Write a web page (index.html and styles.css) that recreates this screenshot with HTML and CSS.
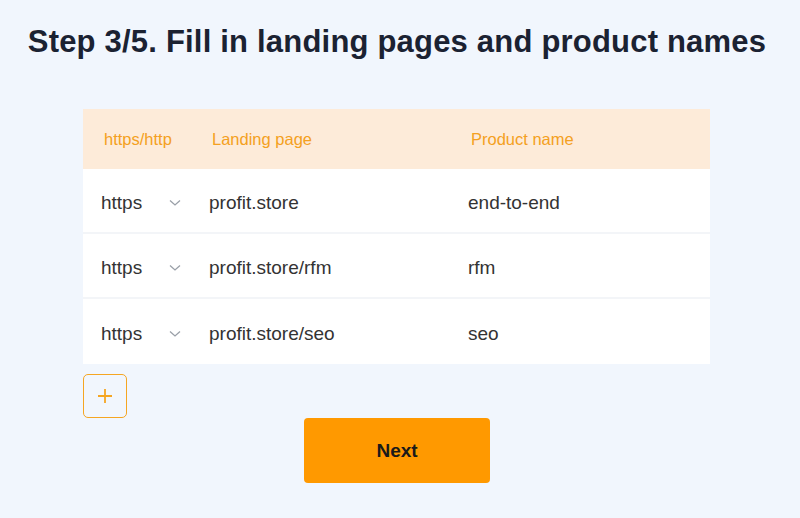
FILE: index.html
```html
<!DOCTYPE html>
<html>
<head>
<meta charset="utf-8">
<link rel="stylesheet" href="styles.css">
</head>
<body>
<div class="page">
  <h1 class="title">Step 3/5. Fill in landing pages and product names</h1>
  <div class="table">
    <div class="row head">
      <div class="c1">https/http</div>
      <div class="c2">Landing page</div>
      <div class="c3">Product name</div>
    </div>
    <div class="row">
      <div class="c1 sel"><span>https</span><svg class="chev" width="12" height="8" viewBox="0 0 12 8"><path d="M1 1.5 L6 6 L11 1.5" fill="none" stroke="#9aa0a8" stroke-width="1.3"/></svg></div>
      <div class="c2">profit.store</div>
      <div class="c3">end-to-end</div>
    </div>
    <div class="row">
      <div class="c1 sel"><span>https</span><svg class="chev" width="12" height="8" viewBox="0 0 12 8"><path d="M1 1.5 L6 6 L11 1.5" fill="none" stroke="#9aa0a8" stroke-width="1.3"/></svg></div>
      <div class="c2">profit.store/rfm</div>
      <div class="c3">rfm</div>
    </div>
    <div class="row last">
      <div class="c1 sel"><span>https</span><svg class="chev" width="12" height="8" viewBox="0 0 12 8"><path d="M1 1.5 L6 6 L11 1.5" fill="none" stroke="#9aa0a8" stroke-width="1.3"/></svg></div>
      <div class="c2">profit.store/seo</div>
      <div class="c3">seo</div>
    </div>
  </div>
  <div class="actions">
    <button class="add"><svg width="16" height="16" viewBox="0 0 16 16"><path d="M8 1 V15 M1 8 H15" stroke="#f5a623" stroke-width="1.8"/></svg></button>
  </div>
  <div class="next-wrap"><button class="next">Next</button></div>
</div>
</body>
</html>
```
FILE: styles.css
```css
html, body { margin: 0; padding: 0; }
body {
  background: #f1f6fd;
  font-family: "Liberation Sans", Arial, sans-serif;
  width: 800px;
  height: 518px;
  overflow: hidden;
}
.page { padding-top: 22px; }
.title {
  margin: 0;
  text-align: center;
  font-size: 31px;
  font-weight: bold;
  color: #1b2232;
  line-height: 40px;
  letter-spacing: 0.2px;
  padding-right: 6px;
}
.table {
  margin: 47px 0 0 83px;
  width: 627px;
}
.row {
  display: flex;
  align-items: center;
  height: 65px;
  padding-top: 5px;
  box-sizing: border-box;
  background: #fff;
  border-bottom: 2px solid #f3f5f8;
  font-size: 19px;
  color: #333;
}
.row.last { border-bottom: none; }
.row.head {
  height: 60px;
  padding-top: 1px;
  background: #fdebd9;
  border-bottom: none;
  color: #f4a021;
  font-size: 16.5px;
}
.c1 { width: 107px; padding-left: 18px; box-sizing: border-box; }
.c2 { width: 259px; padding-left: 19px; box-sizing: border-box; }
.c3 { flex: 1; padding-left: 19px; }
.head .c1 { padding-left: 21px; }
.head .c2 { padding-left: 22px; }
.head .c3 { padding-left: 22px; }
.sel { display: flex; align-items: center; justify-content: space-between; padding-right: 9px; }
.chev { display: block; }
.actions { margin: 10px 0 0 83px; height: 44px; }
.add {
  width: 44px;
  height: 44px;
  border: 1.5px solid #f5a623;
  border-radius: 5px;
  background: transparent;
  display: flex;
  align-items: center;
  justify-content: center;
  padding: 0;
}
.next-wrap { display: flex; justify-content: center; margin-top: 0; padding-right: 6px; }
.next {
  width: 186px;
  height: 65px;
  background: #ff9900;
  border: none;
  border-radius: 4px;
  font-family: "Liberation Sans", Arial, sans-serif;
  font-size: 19px;
  font-weight: bold;
  color: #1a1a1a;
}
```
